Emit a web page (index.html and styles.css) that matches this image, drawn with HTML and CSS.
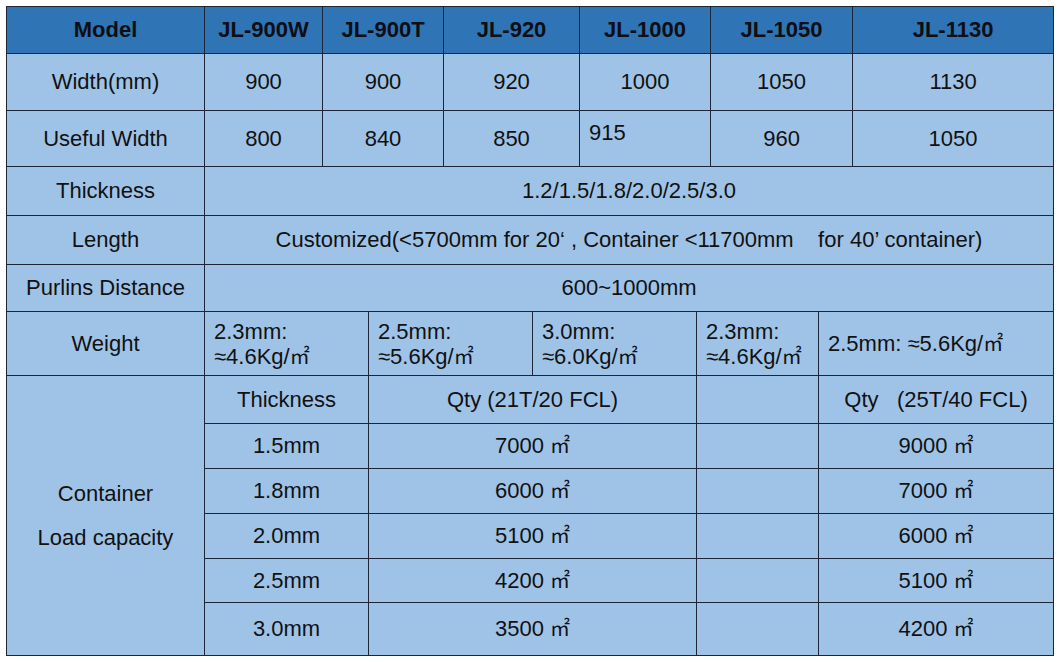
FILE: index.html
```html
<!DOCTYPE html>
<html>
<head>
<meta charset="utf-8">
<link rel="stylesheet" href="styles.css">
</head>
<body>
<table class="spec">
  <colgroup>
    <col class="c1"><col class="c2"><col class="c3"><col class="c4"><col class="c5"><col class="c6"><col class="c7"><col class="c8"><col class="c9"><col class="c10"><col class="c11">
  </colgroup>
  <tr class="r-head">
    <th>Model</th>
    <th>JL-900W</th>
    <th colspan="2">JL-900T</th>
    <th colspan="2">JL-920</th>
    <th colspan="2">JL-1000</th>
    <th colspan="2">JL-1050</th>
    <th>JL-1130</th>
  </tr>
  <tr class="r-width">
    <td>Width(mm)</td>
    <td>900</td>
    <td colspan="2">900</td>
    <td colspan="2">920</td>
    <td colspan="2">1000</td>
    <td colspan="2">1050</td>
    <td>1130</td>
  </tr>
  <tr class="r-useful">
    <td>Useful Width</td>
    <td>800</td>
    <td colspan="2">840</td>
    <td colspan="2">850</td>
    <td colspan="2" class="odd">915</td>
    <td colspan="2">960</td>
    <td>1050</td>
  </tr>
  <tr class="r-thick">
    <td>Thickness</td>
    <td colspan="10">1.2/1.5/1.8/2.0/2.5/3.0</td>
  </tr>
  <tr class="r-length">
    <td>Length</td>
    <td colspan="10">Customized(&lt;5700mm for 20‘ , Container &lt;11700mm &nbsp;&nbsp;&nbsp;for 40’ container)</td>
  </tr>
  <tr class="r-purlin">
    <td>Purlins Distance</td>
    <td colspan="10">600~1000mm</td>
  </tr>
  <tr class="r-weight">
    <td>Weight</td>
    <td colspan="2" class="wt">2.3mm:<br>≈4.6Kg/<span class="sq">㎡</span></td>
    <td colspan="2" class="wt">2.5mm:<br>≈5.6Kg/<span class="sq">㎡</span></td>
    <td colspan="2" class="wt">3.0mm:<br>≈6.0Kg/<span class="sq">㎡</span></td>
    <td colspan="2" class="wt">2.3mm:<br>≈4.6Kg/<span class="sq">㎡</span></td>
    <td colspan="2" class="wt">2.5mm: ≈5.6Kg/<span class="sq">㎡</span></td>
  </tr>
  <tr class="r-qhead">
    <td rowspan="6" class="cont">Container<br>Load capacity</td>
    <td colspan="2">Thickness</td>
    <td colspan="4">Qty (21T/20 FCL)</td>
    <td colspan="2"></td>
    <td colspan="2">Qty &nbsp;&nbsp;(25T/40 FCL)</td>
  </tr>
  <tr class="r-q">
    <td colspan="2">1.5mm</td>
    <td colspan="4">7000 <span class="sq">㎡</span></td>
    <td colspan="2"></td>
    <td colspan="2">9000 <span class="sq">㎡</span></td>
  </tr>
  <tr class="r-q">
    <td colspan="2">1.8mm</td>
    <td colspan="4">6000 <span class="sq">㎡</span></td>
    <td colspan="2"></td>
    <td colspan="2">7000 <span class="sq">㎡</span></td>
  </tr>
  <tr class="r-q">
    <td colspan="2">2.0mm</td>
    <td colspan="4">5100 <span class="sq">㎡</span></td>
    <td colspan="2"></td>
    <td colspan="2">6000 <span class="sq">㎡</span></td>
  </tr>
  <tr class="r-q2">
    <td colspan="2">2.5mm</td>
    <td colspan="4">4200 <span class="sq">㎡</span></td>
    <td colspan="2"></td>
    <td colspan="2">5100 <span class="sq">㎡</span></td>
  </tr>
  <tr class="r-last">
    <td colspan="2">3.0mm</td>
    <td colspan="4">3500 <span class="sq">㎡</span></td>
    <td colspan="2"></td>
    <td colspan="2">4200 <span class="sq">㎡</span></td>
  </tr>
</table>
</body>
</html>
```

FILE: styles.css
```css
html, body {
  margin: 0;
  padding: 0;
  background: #ffffff;
}
body {
  padding: 6px;
  font-family: "Liberation Sans", Arial, sans-serif;
}
.spec {
  table-layout: fixed;
  width: 1047px;
  border-collapse: collapse;
  border: 1px solid #3b4a5e;
}
.c1 { width: 198px; }
.c2 { width: 118px; }
.c3 { width: 46px; }
.c4 { width: 75px; }
.c5 { width: 89px; }
.c6 { width: 47px; }
.c7 { width: 117px; }
.c8 { width: 14px; }
.c9 { width: 108px; }
.c10 { width: 34px; }
.c11 { width: 201px; }

.spec th, .spec td {
  border: 1px solid #1c2638;
  padding: 0;
  text-align: center;
  vertical-align: middle;
  font-size: 22px;
  color: #111111;
  white-space: nowrap;
  overflow: hidden;
}
.spec th {
  background: #2f74b4;
  font-weight: bold;
  color: #0e0e14;
}
.spec td {
  background: #9fc3e7;
}
.r-head { height: 47px; }
.r-width { height: 57px; }
.r-useful { height: 56px; }
.r-thick { height: 49px; }
.r-length { height: 49px; }
.r-purlin { height: 47px; }
.r-weight { height: 64px; }
.r-qhead { height: 48px; }
.r-q { height: 45px; }
.r-q2 { height: 44px; }
.r-last { height: 53px; }

.spec td.odd {
  text-align: left;
  padding-left: 9px;
  padding-bottom: 11px;
}
.spec td.wt {
  text-align: left;
  padding-left: 9px;
  line-height: 25px;
}
.spec td.cont {
  line-height: 44px;
  padding-bottom: 0;
}
.sq {
  font-family: "Noto Sans CJK SC", "Liberation Serif", serif;
  font-size: 20px;
  line-height: 1;
}
```
